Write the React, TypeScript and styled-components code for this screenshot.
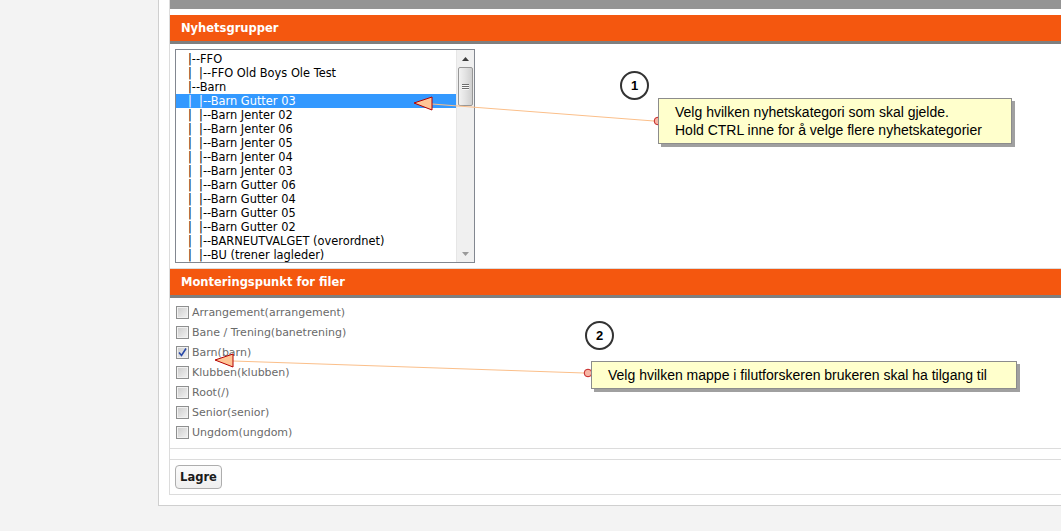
import styled, { createGlobalStyle } from "styled-components";

const GlobalStyle = createGlobalStyle`
  html, body {
    margin: 0;
    padding: 0;
    background: #f3f3f3;
  }
  body {
    font-family: "DejaVu Sans", Verdana, sans-serif;
  }
`;

interface Option {
  label: string;
  selected?: boolean;
}

const newsGroups: Option[] = [
  { label: "|--FFO" },
  { label: "|\u00a0\u00a0|--FFO Old Boys Ole Test" },
  { label: "|--Barn" },
  { label: "|\u00a0\u00a0|--Barn Gutter 03", selected: true },
  { label: "|\u00a0\u00a0|--Barn Jenter 02" },
  { label: "|\u00a0\u00a0|--Barn Jenter 06" },
  { label: "|\u00a0\u00a0|--Barn Jenter 05" },
  { label: "|\u00a0\u00a0|--Barn Jenter 04" },
  { label: "|\u00a0\u00a0|--Barn Jenter 03" },
  { label: "|\u00a0\u00a0|--Barn Gutter 06" },
  { label: "|\u00a0\u00a0|--Barn Gutter 04" },
  { label: "|\u00a0\u00a0|--Barn Gutter 05" },
  { label: "|\u00a0\u00a0|--Barn Gutter 02" },
  { label: "|\u00a0\u00a0|--BARNEUTVALGET (overordnet)" },
  { label: "|\u00a0\u00a0|--BU (trener lagleder)" },
];

const mounts = [
  { label: "Arrangement(arrangement)", checked: false },
  { label: "Bane / Trening(banetrening)", checked: false },
  { label: "Barn(barn)", checked: true },
  { label: "Klubben(klubben)", checked: false },
  { label: "Root(/)", checked: false },
  { label: "Senior(senior)", checked: false },
  { label: "Ungdom(ungdom)", checked: false },
];

const Page = styled.div`
  position: relative;
  display: flex;
  width: 1061px;
  min-height: 531px;
  overflow: hidden;
`;

const Gutter = styled.div`
  width: 158px;
  flex-shrink: 0;
`;

const Panel = styled.div`
  flex: 1;
  align-self: flex-start;
  background: #fff;
  border-left: 1px solid #cfcfcf;
  border-bottom: 1px solid #cfcfcf;
  padding: 0 0 10px 10px;
`;

const Inner = styled.div`
  border-left: 1px solid #dcdcdc;
`;

const TopBar = styled.div`
  height: 9px;
  background: #949494;
  margin-bottom: 6px;
`;

const SectionHead = styled.div`
  height: 26px;
  background: #f4570f;
  border-bottom: 3px solid #7f7f7f;
  color: #fff;
  font-weight: bold;
  font-size: 11.5px;
  line-height: 26px;
  padding-left: 11px;
`;

const SectionBody = styled.div<{ $pad: string }>`
  padding: ${(p) => p.$pad};
  border-bottom: 1px solid #dcdcdc;
`;

const Spacer = styled.div`
  height: 10px;
  border-bottom: 1px solid #dcdcdc;
`;

const ListBox = styled.div`
  display: flex;
  width: 298px;
  height: 212px;
  border: 1px solid #828790;
  overflow: hidden;
  background: #fff;
`;

const Options = styled.div`
  flex: 1;
  padding-top: 2px;
`;

const Item = styled.div<{ $selected?: boolean }>`
  height: 14px;
  line-height: 14px;
  font-size: 11.4px;
  white-space: pre;
  padding-left: 12px;
  color: ${(p) => (p.$selected ? "#fff" : "#000")};
  background: ${(p) => (p.$selected ? "#3399ff" : "transparent")};
`;

const ScrollBar = styled.div`
  width: 17px;
  display: flex;
  flex-direction: column;
  background: #f0f0f0;
  border-left: 1px solid #e6e6e6;
`;

const Arrow = styled.div`
  height: 17px;
  display: flex;
  align-items: center;
  justify-content: center;
`;

const Track = styled.div`
  flex: 1;
`;

const Thumb = styled.div`
  margin: 0 1px;
  height: 37px;
  border: 1px solid #979797;
  border-radius: 2px;
  background: linear-gradient(to right, #f2f2f2, #e2e2e2 50%, #cfcfcf);
  display: flex;
  flex-direction: column;
  align-items: center;
  justify-content: center;
  gap: 1px;
`;

const Grip = styled.span`
  width: 7px;
  height: 1px;
  background: #6e6e6e;
  box-shadow: 0 1px 0 #fafafa;
`;

const CheckRow = styled.label`
  display: flex;
  align-items: center;
  height: 20px;
  gap: 3px;
  font-size: 11px;
  color: #6a6a6a;
`;

const Box = styled.span`
  width: 11px;
  height: 11px;
  border: 1px solid #8e8f8f;
  background: linear-gradient(135deg, #cbcbcb, #f3f3f3);
  box-shadow: inset 0 0 0 1px #f1f1f1;
  display: flex;
  align-items: center;
  justify-content: center;
`;

const Button = styled.button`
  width: 47px;
  height: 24px;
  border: 1px solid #adadad;
  border-radius: 4px;
  background: linear-gradient(#fbfbfb, #efefef);
  font-family: "DejaVu Sans", Verdana, sans-serif;
  font-weight: bold;
  font-size: 11.5px;
  color: #1a1a1a;
  padding: 0;
`;

const Note = styled.div<{ $x: number; $y: number; $w: number; $h: number }>`
  position: absolute;
  left: ${(p) => p.$x}px;
  top: ${(p) => p.$y}px;
  width: ${(p) => p.$w}px;
  height: ${(p) => p.$h}px;
  box-sizing: border-box;
  background: #ffffcc;
  border: 1px solid #8c8c8c;
  box-shadow: 3px 3px 0 #a0a0a0;
  padding: 4px 0 0 16px;
  font-family: "Liberation Sans", Arial, sans-serif;
  font-size: 14px;
  line-height: 18px;
  color: #000;
`;

const Badge = styled.div<{ $x: number; $y: number }>`
  position: absolute;
  left: ${(p) => p.$x - 14}px;
  top: ${(p) => p.$y - 14}px;
  width: 25px;
  height: 25px;
  border: 2px solid #333;
  border-radius: 50%;
  background: #fff;
  font-family: "Liberation Sans", Arial, sans-serif;
  font-weight: bold;
  font-size: 13px;
  line-height: 25px;
  text-align: center;
  color: #000;
`;

const Overlay = styled.svg`
  position: absolute;
  left: 0;
  top: 0;
  pointer-events: none;
`;

function Pointer({ tip, base, dot }: { tip: [number, number]; base: number; dot: [number, number] }) {
  const [tx, ty] = tip;
  return (
    <g>
      <line x1={base} y1={ty + 1} x2={dot[0] - 4} y2={dot[1]} stroke="#fbbf8a" strokeWidth={1} />
      <polygon
        points={`${tx},${ty} ${base},${ty - 6} ${base},${ty + 7}`}
        fill="#ffc596"
        stroke="#b40000"
        strokeWidth={1}
      />
      <circle cx={dot[0]} cy={dot[1]} r={3.8} fill="#f7b5a4" stroke="#c52222" strokeWidth={1} />
    </g>
  );
}

export default function App() {
  return (
    <>
      <GlobalStyle />
      <Page>
        <Gutter />
        <Panel>
          <Inner>
            <TopBar />
            <SectionHead>Nyhetsgrupper</SectionHead>
            <SectionBody $pad="5px 5px 5px 5px">
              <ListBox>
                <Options>
                  {newsGroups.map((o, i) => (
                    <Item key={i} $selected={o.selected}>
                      {o.label}
                    </Item>
                  ))}
                </Options>
                <ScrollBar>
                  <Arrow>
                    <svg width="7" height="4" viewBox="0 0 7 4">
                      <path d="M0 4 L3.5 0 L7 4 Z" fill="#3c3c3c" />
                    </svg>
                  </Arrow>
                  <Track>
                    <Thumb>
                      <Grip />
                      <Grip />
                      <Grip />
                    </Thumb>
                  </Track>
                  <Arrow>
                    <svg width="7" height="4" viewBox="0 0 7 4">
                      <path d="M0 0 L3.5 4 L7 0 Z" fill="#9a9a9a" />
                    </svg>
                  </Arrow>
                </ScrollBar>
              </ListBox>
            </SectionBody>
            <SectionHead>Monteringspunkt for filer</SectionHead>
            <SectionBody $pad="4px 6px 6px 6px">
              {mounts.map((m) => (
                <CheckRow key={m.label}>
                  <Box>
                    {m.checked && (
                      <svg width="9" height="9" viewBox="0 0 9 9">
                        <path d="M1 4.5 L3.5 7.5 L8 0.5" fill="none" stroke="#2a4aa8" strokeWidth={1.6} />
                      </svg>
                    )}
                  </Box>
                  {m.label}
                </CheckRow>
              ))}
            </SectionBody>
            <Spacer />
            <SectionBody $pad="5px 5px 5px 5px">
              <Button>Lagre</Button>
            </SectionBody>
          </Inner>
        </Panel>

        <Overlay width={1061} height={531}>
          <Pointer tip={[414, 103]} base={432} dot={[658, 121]} />
          <Pointer tip={[215, 360]} base={233} dot={[588, 373]} />
        </Overlay>

        <Badge $x={634} $y={85}>1</Badge>
        <Note $x={658} $y={98} $w={354} $h={46}>
          Velg hvilken nyhetskategori som skal gjelde.
          <br />
          Hold CTRL inne for å velge flere nyhetskategorier
        </Note>

        <Badge $x={599} $y={335}>2</Badge>
        <Note $x={591} $y={361} $w={426} $h={28}>
          Velg hvilken mappe i filutforskeren brukeren skal ha tilgang til
        </Note>
      </Page>
    </>
  );
}
